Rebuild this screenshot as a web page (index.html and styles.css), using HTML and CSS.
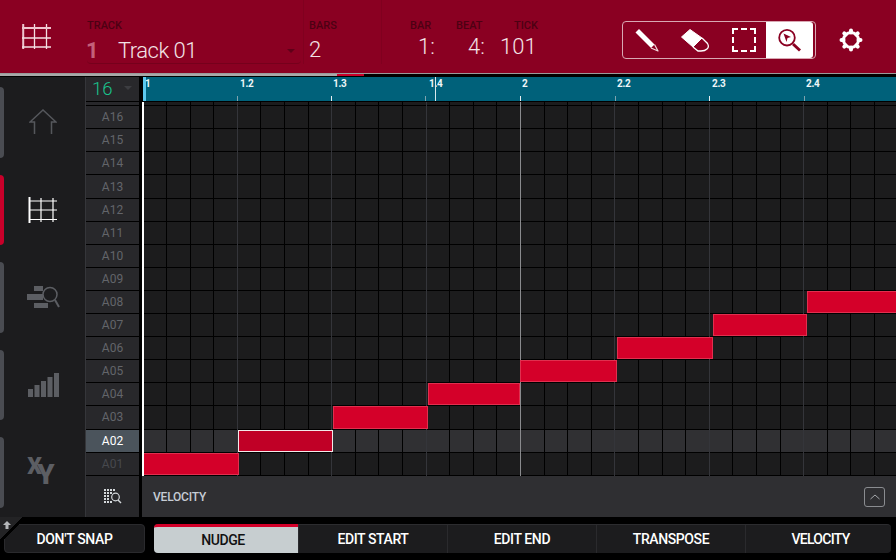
FILE: index.html
```html
<!DOCTYPE html>
<html lang="en">
<head>
<meta charset="utf-8">
<title>Grid</title>
<link rel="stylesheet" href="styles.css">
</head>
<body>
<div class="app">
  <header class="top">
    <div class="mode-icon">
      <svg width="30" height="26" viewBox="0 0 30 26"><path d="M1.200 0v25" class="wline thick"/><path d="M12.500 0v25M24.500 0v25M0 14h29M0 23h29" class="wline"/><path d="M0 4h29" class="wline thick"/></svg>
    </div>
    <div class="field track-field">
      <span class="cap">TRACK</span>
      <div class="track-val"><b class="tnum">1</b><span class="tname">Track 01</span><i class="tri"></i></div>
    </div>
    <div class="field bars-field">
      <span class="cap">BARS</span>
      <span class="val">2</span>
    </div>
    <div class="pos">
      <div class="pos-item p-bar"><span class="cap">BAR</span><span class="val">1:</span></div>
      <div class="pos-item p-beat"><span class="cap">BEAT</span><span class="val">4:</span></div>
      <div class="pos-item p-tick"><span class="cap">TICK</span><span class="val">101</span></div>
    </div>
    <div class="tools">
      <div class="tool"><svg width="28" height="28" viewBox="0 0 28 28"><path d="M2.500 6.500L6 3l15.500 15.500-3.500 3.500z" fill="#fff"/><path d="M21.500 18.500l3.500 6.500-7-3" fill="none" stroke="#f3d9df" stroke-width="1.200" stroke-linejoin="round"/></svg></div>
      <div class="tool"><svg width="30" height="26" viewBox="0 0 30 26"><path d="M1.500 10L10 2.500 22 11l-9 9z" fill="#fff" stroke="#fff" stroke-linejoin="round"/><path d="M22 11l5.500 5.500Q29.500 20 27 22q-2 2-6 2h-3l-5-4" fill="none" stroke="#fff" stroke-width="1.300"/></svg></div>
      <div class="tool shift-right"><svg width="24" height="24" viewBox="0 0 24 24"><path d="M1 6V1h5M9 1h6M18 1h5v5M23 9v6M23 18v5h-5M15 23H9M6 23H1v-5M1 15V9" fill="none" stroke="#fff" stroke-width="2"/></svg></div>
      <div class="tool on"><svg width="26" height="26" viewBox="0 0 26 26"><circle cx="10" cy="10.700" r="7.800" fill="none" stroke="#8a0022" stroke-width="1.800"/><path d="M6.500 6.500l7.500 3.500-3.500 1-1 4z" fill="#8a0022"/><path d="M16 17l7 6.500" stroke="#8a0022" stroke-width="3"/></svg></div>
    </div>
    <div class="gear">
      <svg width="24" height="24" viewBox="0 0 24 24"><circle cx="12" cy="12" r="7.500" fill="none" stroke="#fff" stroke-width="3"/><path d="M12 2.500v2M12 19.500v2M2.500 12h2M19.500 12h2M5.300 5.300l1.400 1.400M17.300 17.300l1.400 1.400M5.300 18.700l1.400-1.400M17.300 6.700l1.400-1.400" stroke="#fff" stroke-width="4" stroke-linecap="round"/></svg>
    </div>
  </header>
  <div class="progress"><div class="prog-done"></div><div class="prog-red"></div></div>

  <main class="main">
    <aside class="side">
      <div class="tab"><span class="pill"></span><svg width="28" height="26" viewBox="0 0 28 26"><path d="M5.500 25V13H1L14 1l13 12h-4.500v12" fill="none" stroke="#55575c" stroke-width="1.500"/></svg></div>
      <div class="tab active"><span class="pill"></span><svg width="30" height="26" viewBox="0 0 30 26"><path d="M1.500 0v26" fill="none" stroke="#fff" stroke-width="2"/><path d="M13 1v24M25 1v24M1 4h28M1 13h28M1 22.500h28" fill="none" stroke="#fff" stroke-width="1.200"/></svg></div>
      <div class="tab"><span class="pill"></span><svg width="34" height="24" viewBox="0 0 34 24"><path d="M8 1h9v5H8zM1 9h16v6H1zM8 18h14v5H8z" fill="#5c5e63"/><circle cx="24" cy="9.500" r="7" fill="#1c1c1e" stroke="#5c5e63" stroke-width="1.500"/><path d="M29 15l4 7" stroke="#5c5e63" stroke-width="2"/></svg></div>
      <div class="tab"><span class="pill"></span><svg width="32" height="26" viewBox="0 0 32 26"><path d="M1 17h5v8H1zM7.500 13h5v12h-5zM14 9h5v16h-5zM20.500 5h5v20h-5zM27 1h5v24h-5z" fill="#5c5e63"/></svg></div>
      <div class="tab"><span class="pill"></span><span class="xy">X<span class="y">Y</span></span></div>
    </aside>
    <section class="content">
      <div class="ruler-row">
        <div class="zoom-box"><span class="znum">16</span><i class="tri grey"></i></div>
        <div class="ruler">
          <span class="cursor-head"></span>
          <span class="rl" style="left:2px">1</span>
          <span class="rl" style="left:97px">1.2</span>
          <span class="rl" style="left:190px">1.3</span>
          <span class="rl" style="left:286px">1.4</span>
          <span class="rl" style="left:379px">2</span>
          <span class="rl" style="left:474px">2.2</span>
          <span class="rl" style="left:569px">2.3</span>
          <span class="rl" style="left:663px">2.4</span>
          <span class="tick dim" style="left:94px"></span>
          <span class="tick" style="left:188px"></span>
          <span class="tick dim" style="left:282px"></span>
          <span class="tick" style="left:377px"></span>
          <span class="tick dim" style="left:472px"></span>
          <span class="tick" style="left:566px"></span>
          <span class="tick dim" style="left:661px"></span>
          <span class="locator"></span>
        </div>
      </div>
      <div class="roll">
        <div class="stub"><div class="key"></div><div class="sep"></div><div class="track"></div></div>
        <div class="row"><div class="key">A16</div><div class="sep"></div><div class="track"></div></div>
        <div class="row"><div class="key">A15</div><div class="sep"></div><div class="track"></div></div>
        <div class="row"><div class="key">A14</div><div class="sep"></div><div class="track"></div></div>
        <div class="row"><div class="key">A13</div><div class="sep"></div><div class="track"></div></div>
        <div class="row"><div class="key">A12</div><div class="sep"></div><div class="track"></div></div>
        <div class="row"><div class="key">A11</div><div class="sep"></div><div class="track"></div></div>
        <div class="row"><div class="key">A10</div><div class="sep"></div><div class="track"></div></div>
        <div class="row"><div class="key">A09</div><div class="sep"></div><div class="track"></div></div>
        <div class="row"><div class="key">A08</div><div class="sep"></div><div class="track"><div class="note" style="left:665px;width:100px"></div></div></div>
        <div class="row"><div class="key">A07</div><div class="sep"></div><div class="track"><div class="note" style="left:571px;width:94px"></div></div></div>
        <div class="row"><div class="key">A06</div><div class="sep"></div><div class="track"><div class="note" style="left:475px;width:96px"></div></div></div>
        <div class="row"><div class="key">A05</div><div class="sep"></div><div class="track"><div class="note" style="left:378px;width:97px"></div></div></div>
        <div class="row"><div class="key">A04</div><div class="sep"></div><div class="track"><div class="note" style="left:286px;width:92px"></div></div></div>
        <div class="row"><div class="key">A03</div><div class="sep"></div><div class="track"><div class="note" style="left:191px;width:95px"></div></div></div>
        <div class="row cur"><div class="key">A02</div><div class="sep"></div><div class="track"><div class="note sel" style="left:96px;width:95px"></div></div></div>
        <div class="row"><div class="key dim">A01</div><div class="sep"></div><div class="track"><div class="note" style="left:0;width:97px"></div></div></div>
        <div class="cols">
          <i></i><i></i><i></i><i></i><i class="b"></i><i></i><i></i><i></i><i class="b"></i><i></i><i></i><i></i><i class="b"></i><i></i><i></i><i></i><i class="bar"></i><i></i><i></i><i></i><i class="b"></i><i></i><i></i><i></i><i class="b"></i><i></i><i></i><i></i><i class="b"></i><i></i><i></i><i></i>
        </div>
        <div class="playhead"></div>
      </div>
      <div class="vel-row">
        <div class="vel-icon"><svg width="18" height="15" viewBox="0 0 18 15"><path d="M0 1h11M0 4h8M0 7h6M0 10h6M0 13h8" stroke="#d4d8db" stroke-width="2" stroke-dasharray="2 1"/><circle cx="11.500" cy="8" r="3.800" fill="#28282b" stroke="#d4d8db" stroke-width="1.200"/><path d="M14 11l3 3" stroke="#d4d8db" stroke-width="1.400"/></svg></div>
        <div class="vel-panel"><span class="vel-label">VELOCITY</span><span class="collapse"><svg width="10" height="6" viewBox="0 0 10 6"><path d="M.5 5L5 1l4.500 4" fill="none" stroke="#a5a8ac"/></svg></span></div>
      </div>
    </section>
  </main>

  <footer class="bottom">
    <span class="shift"><svg width="8" height="8" viewBox="0 0 8 8"><path d="M4 0l4 4H5.500v4h-3V4H0z" fill="#b5b7ba"/></svg></span>
    <div class="snap">DON'T SNAP</div>
    <div class="tabs">
      <div class="ft on">NUDGE</div>
      <div class="ft">EDIT START</div>
      <div class="ft">EDIT END</div>
      <div class="ft">TRANSPOSE</div>
      <div class="ft last">VELOCITY</div>
    </div>
  </footer>
</div>
</body>
</html>
```
FILE: styles.css
```css
* { box-sizing: border-box; }
html, body { margin: 0; padding: 0; background: #000; }
body { font-family: Roboto, "Liberation Sans", sans-serif; overflow: hidden; }
.app { width: 896px; height: 560px; display: flex; flex-direction: column; overflow: hidden; }

.top { height: 73px; flex: none; background: #8a0022; display: flex; position: relative; color: #f1dfe3; }
.mode-icon { width: 87px; padding: 24px 0 0 22px; flex: none; }
.wline { fill: none; stroke: #f4dfe3; stroke-width: 1.300; }
.wline.thick { stroke: #eec5cf; stroke-width: 2; }
.cap { display: block; font-size: 11px; line-height: 12px; font-weight: 500; color: #4d0013; }
.field { padding-top: 20px; }
.track-field { width: 214px; height: 64px; border-bottom: 1px solid #76001c; border-radius: 0 0 4px 4px; flex: none; }
.track-val { display: flex; align-items: center; position: relative; margin-top: 5px; height: 26px; }
.tnum { width: 32px; margin-left: -1px; font-size: 22px; font-weight: 700; color: #c4607a; }
.tname { font-size: 22px; font-weight: 300; letter-spacing: -.5px; color: #f3e3e6; }
.tri { position: absolute; right: 6px; top: 12px; border: 4px solid transparent; border-top-color: #5f0018; border-bottom: 0; }
.bars-field { width: 79px; margin-left: 2px; padding-left: 5px; height: 64px; border-left: 1px solid #80001f; border-right: 1px solid #80001f; flex: none; }
.val { display: block; font-size: 22px; font-weight: 300; line-height: 26px; margin-top: 5px; color: #f3e3e6; }
.pos { display: flex; padding-top: 20px; flex: none; width: 240px; }
.pos .val { margin-top: 2px; }
.pos-item { position: relative; flex: none; }
.p-bar { width: 58px; padding-left: 28px; }
.p-beat { width: 58px; padding-left: 16px; }
.p-bar .val { padding-left: 8px; }
.p-beat .val { padding-left: 12px; }
.p-tick .cap { padding-left: 16px; }
.p-tick .val { margin-left: 2px; }
.tools { width: 194px; height: 38px; margin-top: 21px; display: flex; border: 1px solid #d9a8b3; border-radius: 4px; flex: none; }
.tool { width: 48px; display: flex; align-items: center; justify-content: center; flex: none; }
.tool.shift-right { padding-left: 2px; }
.tool.on { background: #fff; width: 47px; border-radius: 0 3px 3px 0; margin-left: -1px; }
.gear { width: 24px; margin: 28px 0 0 23px; flex: none; }

.progress { height: 4px; flex: none; background: #000; border-top: 1px solid #9a9a9a; display: flex; }
.prog-done { width: 337px; height: 2px; background: #a9a9a9; }
.prog-red { width: 27px; height: 2px; background: #c8002a; }

.main { height: 440px; flex: none; display: flex; }
.side { width: 86px; flex: none; background: #1c1c1e; border-right: 1px solid #35363a; padding-top: 10px; display: flex; flex-direction: column; gap: 17px; }
.tab { height: 70.500px; flex: none; display: flex; align-items: center; justify-content: center; position: relative; }
.pill { position: absolute; left: 0; top: 0; bottom: 0; width: 4px; background: #4a4c52; border-radius: 0 4px 4px 0; }
.active .pill { background: #c8002a; }
.xy { font-size: 23px; font-weight: 900; color: #5c5e63; line-height: 1; letter-spacing: -5px; padding-bottom: 14px; margin-left: -3px; }
.xy .y { position: relative; top: 10px; font-size: 28px; letter-spacing: 0; }

.content { flex: 1; min-width: 0; display: flex; flex-direction: column; }
.ruler-row { height: 24px; flex: none; display: flex; }
.zoom-box { width: 53px; background: #28282b; display: flex; align-items: center; position: relative; padding-left: 6px; flex: none; }
.znum { font-size: 18.500px; font-weight: 300; color: #19c28d; }
.tri.grey { right: 7px; top: 9px; border-top-color: #3c3d41; }
.ruler { flex: 1; margin-left: 4px; background: #00617a; position: relative; overflow: hidden; }
.cursor-head { position: absolute; left: 0; top: 0; bottom: 0; width: 3px; background: #5cc8ee; }
.rl { position: absolute; top: 1px; font-size: 10px; font-weight: 700; letter-spacing: -.3px; color: #eef6f8; line-height: 12px; }
.tick { position: absolute; bottom: 0; width: 1px; height: 5px; background: #e8eff1; }
.tick.dim { background: #7fa3ae; }
.locator { position: absolute; left: 292px; top: 0; bottom: 0; width: 1px; background: #d8e8ec; }

.roll { height: 375px; flex: none; position: relative; display: flex; flex-direction: column; border-top: 1px solid #000; }
.row, .stub { display: flex; flex: none; }
.row { height: 23.100px; }
.stub { height: 4.200px; }
.key { width: 53px; flex: none; background: #28282b; border-bottom: 1px solid #000; font-size: 12px; font-weight: 400; color: #63656a; display: flex; align-items: center; justify-content: center; }
.sep { width: 3px; flex: none; background: #000; }
.track { flex: 1; position: relative; background: #1c1c1d; border-bottom: 1px solid #000; }
.cur .key { background: #4b545c; color: #fff; }
.cur .track { background: #303033; }
.key.dim { color: #47494e; }
.note { position: absolute; top: 0; bottom: 0; background: #d40029; border: 1px solid #e0304f; z-index: 2; }
.note.sel { background: #c00026; border: 1px solid #f2eaea; }
.cols { position: absolute; left: 56.500px; top: 0; bottom: 0; width: 755px; display: flex; z-index: 1; }
.cols i { flex: 1; border-left: 1px solid #000; }
.cols i:first-child { border-left-color: transparent; }
.cols i.b { border-left-color: #34353a; }
.cols i.bar { border-left-color: #8a8b8e; }
.playhead { position: absolute; left: 56px; top: 0; bottom: 0; width: 1.500px; background: #fff; z-index: 3; }

.vel-row { height: 41px; flex: none; display: flex; }
.vel-icon { width: 53px; background: #28282b; display: flex; align-items: center; justify-content: center; flex: none; }
.vel-panel { flex: 1; margin-left: 3px; background: #2f2f32; display: flex; align-items: center; justify-content: space-between; padding: 0 11px 0 11px; }
.vel-label { font-size: 12px; font-weight: 500; letter-spacing: -.2px; color: #c6ccd4; }
.collapse { width: 21px; height: 20px; border: 1px solid #8a8c90; border-radius: 3px; display: flex; align-items: center; justify-content: center; }

.bottom { flex: 1; background: #000; display: flex; padding: 7px 5px 7px 4px; position: relative; }
.shift { position: absolute; left: 0; top: 0; z-index: 2; width: 24px; height: 24px; line-height: 0; padding: 4px 0 0 3px; background: linear-gradient(135deg, #232325 0 46%, #000 46% 56%, transparent 56%); }
.snap { width: 141px; background: #1c1c1e; border: 1px solid #2a2a2d; border-radius: 4px; display: flex; align-items: center; justify-content: center; color: #fff; font-size: 14px; font-weight: 500; letter-spacing: -.35px; flex: none; }
.tabs { flex: 1; margin-left: 9px; display: flex; background: #1c1c1e; border-radius: 4px; border-top: 1px solid #2c2c2f; }
.ft { width: 149px; flex: none; color: #fff; font-size: 14px; font-weight: 500; letter-spacing: -.4px; display: flex; align-items: center; justify-content: center; border-left: 1px solid #2a2a2d; }
.ft.on { width: 144px; padding-right: 6px; background: #c7ced0; color: #111; border-left: 0; border-top: 3px solid #d40029; margin-top: -1px; border-radius: 4px 0 0 4px; }
.ft.last { width: 146px; padding-left: 4px; letter-spacing: -.7px; }
```
